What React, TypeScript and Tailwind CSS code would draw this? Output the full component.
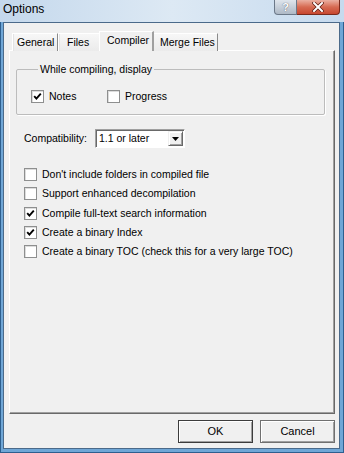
import React from 'react';

const font = "font-['Liberation_Sans',Arial,sans-serif]";

const Check = ({ checked }: { checked?: boolean }) => (
  <span className="relative inline-block w-[13px] h-[13px] shrink-0 bg-white border border-[#8e8f8f] shadow-[inset_1px_1px_0_#dcdcdc]">
    {checked && (
      <svg className="absolute left-[1px] top-[1px]" width="9" height="9" viewBox="0 0 9 9">
        <path d="M1.2 4.2 L3.4 6.6 L7.8 1.6" fill="none" stroke="#000" strokeWidth="1.9" />
      </svg>
    )}
  </span>
);

const CheckRow = ({ label, checked, className = '' }: { label: string; checked?: boolean; className?: string }) => (
  <div className={`flex items-center gap-[5px] ${className}`}>
    <Check checked={checked} />
    <span className="text-[10.5px] leading-[13px] text-black whitespace-nowrap">{label}</span>
  </div>
);

// widths / text offsets read off the screenshot
const tabs = [
  { name: 'General', w: 'w-[46px]', pl: 'pl-[4px]' },
  { name: 'Files', w: 'w-[43px]', pl: 'pl-[8px]' },
  { name: 'Compiler', w: 'w-[55px]', pl: 'pl-[7px]' },
  { name: 'Merge Files', w: 'w-[66px]', pl: 'pl-[7px]' },
];

const options = [
  { label: "Don't include folders in compiled file", checked: false },
  { label: 'Support enhanced decompilation', checked: false },
  { label: 'Compile full-text search information', checked: true },
  { label: 'Create a binary Index', checked: true },
  { label: 'Create a binary TOC (check this for a very large TOC)', checked: false },
];

const DialogButton = ({ children, isDefault }: { children: React.ReactNode; isDefault?: boolean }) => (
  <button
    type="button"
    className={`w-[75px] h-[23px] text-[11px] text-black bg-[#f0f0f0] border ${
      isDefault ? 'border-[#3c3c3c]' : 'border-[#707070]'
    } shadow-[inset_1px_1px_0_#ffffff,inset_-1px_-1px_0_#a0a0a0]`}
  >
    {children}
  </button>
);

export default function App() {
  return (
    <div className={`w-[344px] h-[453px] flex flex-col bg-[#6fa6d6] border-l border-r border-b border-[#2d5f8f] ${font}`}>
      {/* Title bar */}
      <div className="h-[22px] -mx-px flex items-start justify-between bg-gradient-to-r from-[#c4d8ec] via-[#dde9f4] to-[#c6daee]">
        <span className="pl-[3px] pt-[2px] text-[12px] leading-[15px] text-black">Options</span>
        <div className="flex mr-[4px]">
          <div className="w-[23px] h-[15px] flex items-center justify-center rounded-bl-[4px] border border-t-0 border-[#6b7888] bg-gradient-to-b from-[#dfe5ec] to-[#aeb9c6] text-[11px] font-bold leading-none text-white [text-shadow:0_0_1px_#334]">
            ?
          </div>
          <div className="w-[43px] h-[15px] flex items-center justify-center rounded-br-[4px] border border-t-0 border-l-0 border-[#7a2a1c] bg-gradient-to-b from-[#eab0a2] via-[#d66a52] to-[#c7472f]">
            <svg width="12" height="10" viewBox="0 0 12 10">
              <path d="M2 1 L10 9 M10 1 L2 9" stroke="#5b1a10" strokeWidth="3.4" strokeLinecap="square" />
              <path d="M2 1 L10 9 M10 1 L2 9" stroke="#ffffff" strokeWidth="2" strokeLinecap="square" />
            </svg>
          </div>
        </div>
      </div>

      {/* Client area */}
      <div className="flex-1 ml-[2px] mr-[3px] mb-[3px] bg-[#f0f0f0] border border-[#4b6a8a] flex flex-col pl-[5px] pr-[4px] pt-[8px]">
        {/* Tabs */}
        <div className="flex items-end h-[20px] pl-[3px] relative z-10">
          {tabs.map((t) => {
            const active = t.name === 'Compiler';
            return active ? (
              <div
                key={t.name}
                className={`relative z-10 -mx-[2px] ${t.w} h-[20px] pt-[1px] ${t.pl} bg-[#f0f0f0] border-l border-t border-white border-r-[2px] border-r-[#a0a0a0] text-[10.5px] leading-[15px] text-black`}
              >
                {t.name}
              </div>
            ) : (
              <div
                key={t.name}
                className={`${t.w} h-[18px] ${t.pl} pt-[1px] bg-gradient-to-b from-[#f7f7f7] to-[#ebebeb] border-l border-t border-white border-r border-r-[#8a8a8a] shadow-[inset_1px_0_0_#e3e3e3] text-[10.5px] leading-[14px] text-black whitespace-nowrap`}
              >
                {t.name}
              </div>
            );
          })}
        </div>

        {/* Tab panel */}
        <div className="h-[364px] -mt-px bg-[#f0f0f0] border border-white border-r-[#696969] border-b-[#696969] shadow-[inset_-1px_-1px_0_#a0a0a0] flex flex-col pt-[12px] pl-[6px]">
          <fieldset className="w-[309px] border border-[#bcbcbc] shadow-[1px_1px_0_#ffffff] pl-[14px] pb-[11px] rounded-[2px]">
            <legend className="ml-[7px] px-[2px] text-[10.5px] leading-[13px] text-black">While compiling, display</legend>
            <div className="flex items-center mt-[14px]">
              <CheckRow label="Notes" checked className="w-[76px]" />
              <CheckRow label="Progress" />
            </div>
          </fieldset>

          <div className="flex items-center mt-[14px] pl-[8px]">
            <span className="w-[71px] text-[10.5px] leading-[13px] text-black">Compatibility:</span>
            <div className="w-[90px] h-[19px] flex items-center bg-white border border-[#a0a0a0] border-r-white border-b-white shadow-[inset_1px_1px_0_#696969]">
              <span className="flex-1 pl-[3px] text-[10.5px] leading-[13px] text-black">1.1 or later</span>
              <div className="w-[15px] h-[15px] mr-px flex items-center justify-center bg-[#f0f0f0] border border-[#f0f0f0] border-r-[#696969] border-b-[#696969] shadow-[inset_1px_1px_0_#ffffff,inset_-1px_-1px_0_#a0a0a0]">
                <svg width="7" height="4" viewBox="0 0 7 4">
                  <path d="M0 0 H7 L3.5 4 Z" fill="#000" />
                </svg>
              </div>
            </div>
          </div>

          <div className="flex flex-col mt-[17px] pl-[8px]">
            {options.map((o) => (
              <CheckRow key={o.label} label={o.label} checked={o.checked} className="h-[19.25px]" />
            ))}
          </div>
        </div>

        {/* Buttons */}
        <div className="flex justify-end gap-[7px] mt-[6px]">
          <DialogButton isDefault>OK</DialogButton>
          <DialogButton>Cancel</DialogButton>
        </div>
      </div>
    </div>
  );
}
